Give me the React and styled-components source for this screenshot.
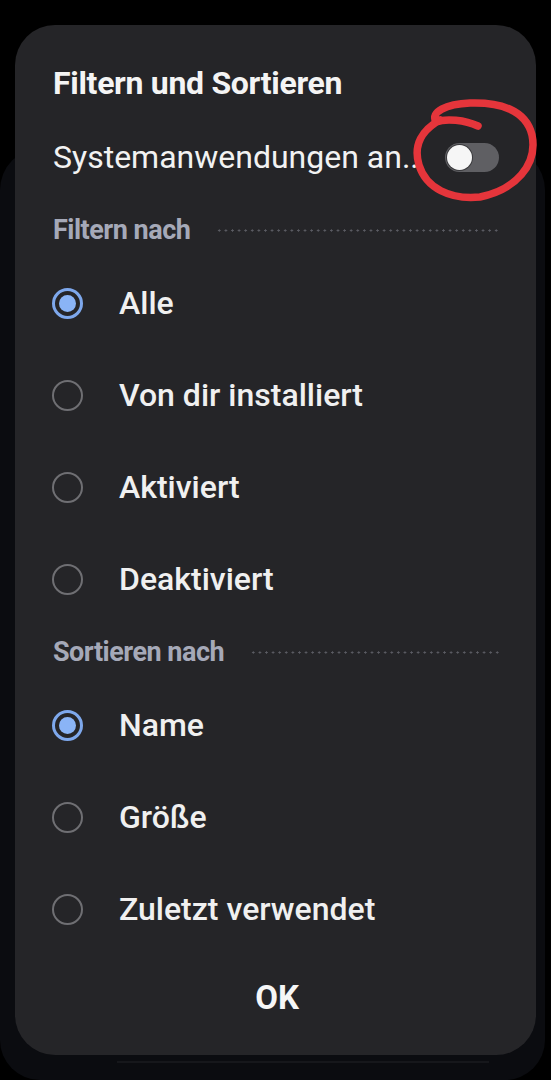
import React from "react";
import styled, { createGlobalStyle } from "styled-components";

const GlobalStyle = createGlobalStyle`
  html, body {
    margin: 0;
    padding: 0;
    background: #000;
    font-family: Roboto, "Noto Sans", "Liberation Sans", sans-serif;
  }
`;

const filterOptions = [
  { id: 1, label: "Alle", checked: true },
  { id: 2, label: "Von dir installiert" },
  { id: 3, label: "Aktiviert" },
  { id: 4, label: "Deaktiviert" },
];

const sortOptions = [
  { id: 1, label: "Name", checked: true },
  { id: 2, label: "Größe" },
  { id: 3, label: "Zuletzt verwendet" },
];

const Page = styled.div`
  position: relative;
  width: 551px;
  height: 1080px;
  overflow: hidden;
  padding-top: 148px;
  box-sizing: border-box;
`;

const Backdrop = styled.div`
  height: 932px;
  margin-right: 6px;
  border-radius: 42px 42px 40px 40px;
  background: #0b0c10;
  display: flex;
  flex-direction: column;
  justify-content: flex-end;
  align-items: center;
  padding-bottom: 17px;
  box-sizing: border-box;
`;

const HomeLine = styled.div`
  width: 372px;
  height: 2px;
  margin-left: 60px;
  background: #16171b;
`;

const Dialog = styled.div`
  position: absolute;
  left: 15px;
  top: 25px;
  width: 521px;
  height: 1030px;
  box-sizing: border-box;
  background: #252528;
  border-radius: 40px;
  padding: 31px 35px 0 38px;
  display: flex;
  flex-direction: column;
`;

const Title = styled.h2`
  margin: 0;
  height: 55px;
  line-height: 55px;
  font-size: 32px;
  font-weight: 700;
  color: #f4f4f4;
  letter-spacing: -0.3px;
`;

const ToggleRow = styled.div`
  height: 92px;
  display: flex;
  align-items: center;
  justify-content: space-between;
`;

const ToggleLabel = styled.span`
  font-size: 32px;
  color: #f2f2f2;
`;

const Track = styled.div`
  width: 54px;
  height: 29px;
  border-radius: 15px;
  background: #5f5f63;
  display: flex;
  align-items: center;
  padding-left: 2px;
  box-sizing: border-box;
  margin-right: 2px;
`;

const Thumb = styled.div`
  width: 25px;
  height: 25px;
  border-radius: 50%;
  background: #f6f6f6;
  box-shadow: 0 0 0 1px #3a3a3d;
`;

const SectionHeader = styled.div`
  height: 54px;
  display: flex;
  align-items: center;
  gap: 26px;
`;

const SectionTitle = styled.span`
  font-size: 27px;
  font-weight: 700;
  color: #a5a9b8;
  letter-spacing: -0.5px;
  white-space: nowrap;
`;

const Dots = styled.div`
  flex: 1;
  height: 3px;
  background-image: radial-gradient(circle, #5c5d64 0.9px, transparent 1.3px);
  background-size: 6.6px 3px;
  background-repeat: repeat-x;
`;

const RadioRow = styled.label`
  height: 92px;
  display: flex;
  align-items: center;
  gap: 36px;
`;

const RadioCircle = styled.span`
  width: 31px;
  height: 31px;
  margin-left: -1px;
  margin-top: 1px;
  box-sizing: border-box;
  border-radius: 50%;
  border: ${(p) => (p.$checked ? "3px solid #7ea8ec" : "2px solid #6f6f73")};
  display: flex;
  align-items: center;
  justify-content: center;
  flex-shrink: 0;
  &::after {
    content: "";
    width: 17px;
    height: 17px;
    border-radius: 50%;
    background: #8ab4f6;
    display: ${(p) => (p.$checked ? "block" : "none")};
  }
`;

const RadioLabel = styled.span`
  font-size: 32px;
  font-weight: 500;
  color: #f0f0f0;
`;

const OkButton = styled.button`
  margin-top: 12px;
  height: 60px;
  border: none;
  background: none;
  font-family: inherit;
  font-size: 33px;
  font-weight: 700;
  color: #f6f6f6;
  padding: 0;
`;

const Scribble = styled.svg`
  position: absolute;
  left: 0;
  top: 0;
  width: 551px;
  height: 1080px;
  pointer-events: none;
`;

const Radio = ({ label, checked }) => (
  <RadioRow>
    <RadioCircle $checked={checked} />
    <RadioLabel>{label}</RadioLabel>
  </RadioRow>
);

export default function App() {
  return (
    <Page>
      <GlobalStyle />
      <Backdrop>
        <HomeLine />
      </Backdrop>
      <Dialog>
        <Title>Filtern und Sortieren</Title>
        <ToggleRow>
          <ToggleLabel>Systemanwendungen an..</ToggleLabel>
          <Track>
            <Thumb />
          </Track>
        </ToggleRow>

        <SectionHeader>
          <SectionTitle>Filtern nach</SectionTitle>
          <Dots />
        </SectionHeader>
        {filterOptions.map((o) => (
          <Radio key={o.id} label={o.label} checked={o.checked} />
        ))}

        <SectionHeader>
          <SectionTitle>Sortieren nach</SectionTitle>
          <Dots />
        </SectionHeader>
        {sortOptions.map((o) => (
          <Radio key={o.id} label={o.label} checked={o.checked} />
        ))}

        <OkButton>OK</OkButton>
      </Dialog>

      {/* red hand-drawn mark around the toggle */}
      <Scribble viewBox="0 0 551 1080">
        <path
          d="M478 126 C465 120 446 118 436 122 C430 112 446 104 470 103 C500 102 526 110 532 135 C538 165 515 190 480 197 C450 200 426 188 419 165 C413 145 422 130 440 120"
          fill="none"
          stroke="#e5353b"
          strokeWidth="7.5"
          strokeLinecap="round"
          strokeLinejoin="round"
        />
      </Scribble>
    </Page>
  );
}
